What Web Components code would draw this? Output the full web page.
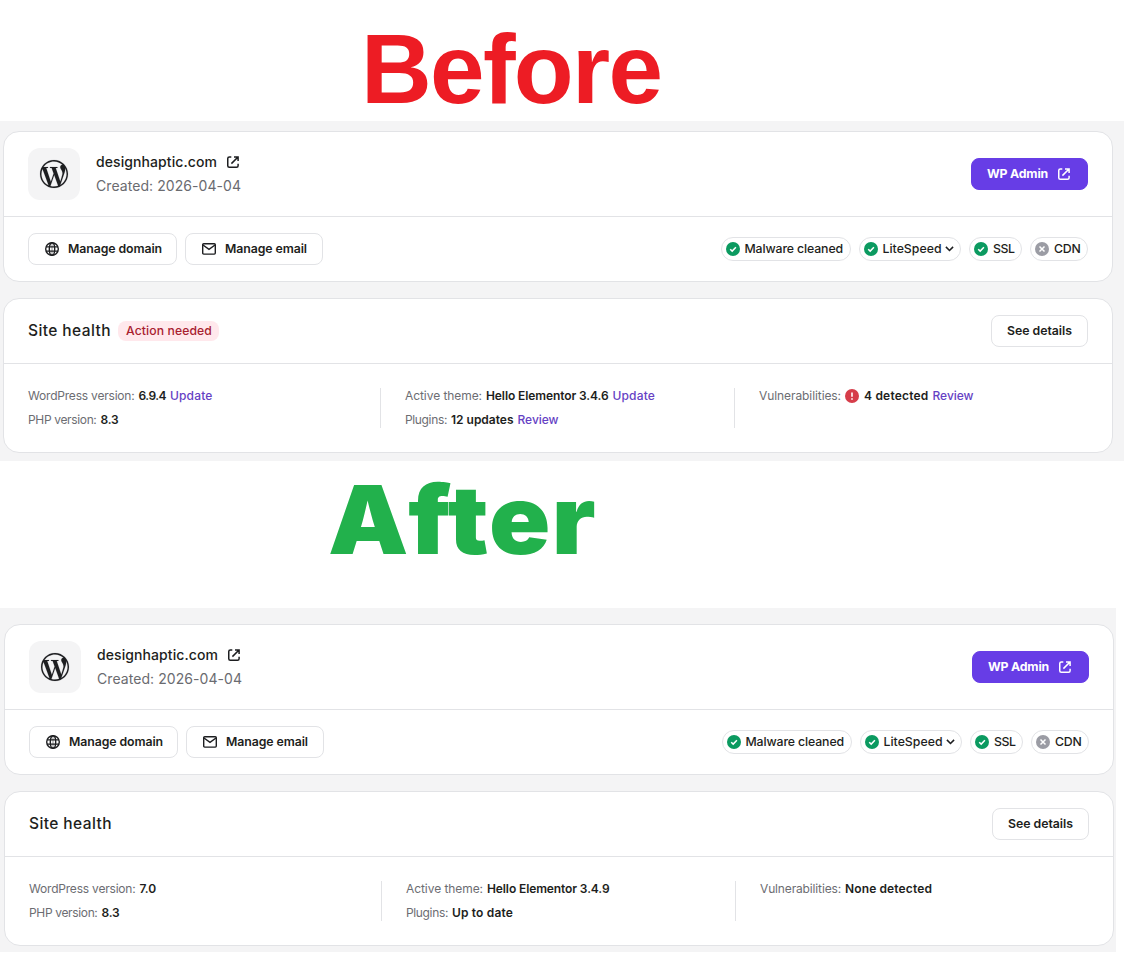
<!DOCTYPE html>
<html lang="en"><head><meta charset="utf-8"><title>Before and after</title>
<style>
body{margin:0;background:#fff;font-family:Inter,"Open Sans",sans-serif;color:#1d1e20}
main{width:1124px;height:976px;display:flex;flex-direction:column;align-items:flex-start}
</style></head><body>
<main>
<big-heading kind="before">Before</big-heading>
<site-panel kind="before"></site-panel>
<big-heading kind="after">After</big-heading>
<site-panel kind="after"></site-panel>
</main>
<script>
const icons={
wp:['0 0 24 24',28,'<path fill="currentColor" stroke="currentColor" stroke-width=".1" fill-rule="evenodd" d="M21.469 6.825c.84 1.537 1.318 3.3 1.318 5.175 0 3.979-2.156 7.456-5.363 9.325l3.295-9.527c.615-1.54.82-2.771.82-3.864 0-.405-.026-.78-.07-1.11m-7.981.105c.647-.03 1.232-.105 1.232-.105.582-.075.514-.93-.067-.899 0 0-1.755.135-2.88.135-1.064 0-2.85-.15-2.85-.15-.585-.03-.661.855-.075.885 0 0 .54.061 1.125.09l1.68 4.605-2.37 7.08L5.354 6.9c.649-.03 1.234-.1 1.234-.1.585-.075.516-.93-.065-.896 0 0-1.746.138-2.874.138-.2 0-.438-.008-.69-.015C4.911 3.15 8.235 1.215 12 1.215c2.809 0 5.365 1.072 7.286 2.833-.046-.003-.091-.009-.141-.009-1.06 0-1.812.923-1.812 1.914 0 .89.513 1.643 1.06 2.531.411.72.89 1.643.89 2.977 0 .915-.354 1.994-.821 3.479l-1.075 3.585-3.9-11.61.001.014zM12 22.784c-1.059 0-2.081-.153-3.048-.437l3.237-9.406 3.315 9.087c.024.053.05.101.078.149-1.12.393-2.325.609-3.582.609M1.211 12c0-1.564.336-3.05.935-4.39L7.29 21.709C3.694 19.96 1.212 16.271 1.211 12M12 0C5.385 0 0 5.385 0 12s5.385 12 12 12 12-5.385 12-12S18.615 0 12 0"/>'],
ext:['0 0 12 12',12,'<path fill="none" stroke="currentColor" stroke-width="1.5" d="M4.3.9H2.4Q.75.9.75 2.4V9.7Q.75 11.25 2.3 11.25H9.6Q11.1 11.25 11.1 9.7V7.7M7 .9H11.1V5M11 1L4.4 7.6"/>'],
globe:['0 0 14 14',14,'<g fill="none" stroke="currentColor" stroke-width="1.4"><circle cx="7" cy="7" r="6.3"/><ellipse cx="7" cy="7" rx="2.7" ry="6.3"/><path d="M1 4.9h12M1 9.1h12"/><path d="M7 1v12" stroke-width=".5"/></g>'],
mail:['0 0 14 12',14,'<g fill="none" stroke="currentColor" stroke-width="1.4"><rect x=".7" y=".7" width="12.6" height="10.4" rx="1"/><path d="M1 2l6 4.3L13 2"/></g>'],
ok:['0 0 14 14',14,'<circle cx="7" cy="7" r="7" fill="#0b9a60"/><path d="M4.2 7.2l2 1.9 3.7-3.8" fill="none" stroke="#fff" stroke-width="1.5"/>'],
off:['0 0 14 14',14,'<circle cx="7" cy="7" r="7" fill="#9b9ca4"/><path d="M4.5 4.5l5 5M9.5 4.5l-5 5" fill="none" stroke="#fff" stroke-width="1.5"/>'],
bang:['0 0 14 14',14,'<circle cx="7" cy="7" r="7" fill="#d63d4a"/><path d="M7 3.4v4.4M7 9.2v1.5" stroke="#fff" stroke-width="1.6"/>'],
chev:['0 0 10 6',9,'<path d="M1 1l4 4 4-4" fill="none" stroke="currentColor" stroke-width="1.7"/>']
};
customElements.define('ui-icon',class extends HTMLElement{
connectedCallback(){const [vb,w,body]=icons[this.getAttribute('name')];
this.attachShadow({mode:'open'}).innerHTML=`<style>:host{display:block;flex:none;width:${w}px}svg{display:block;width:100%;overflow:visible}</style><svg viewBox="${vb}">${body}</svg>`}});

/* Single line of text tracked so that it fills the width given in "w". */
customElements.define('ui-text',class extends HTMLElement{
connectedCallback(){const w=+this.getAttribute('w');
this.attachShadow({mode:'open'}).innerHTML=`<style>:host{display:block;flex:none;white-space:nowrap;width:${w}px}span{display:inline-block}</style><span><slot></slot></span>`;
const s=this.shadowRoot.querySelector('span');
this.style.letterSpacing=((w-s.getBoundingClientRect().width)/this.textContent.length).toFixed(4)+'px'}});

customElements.define('big-heading',class extends HTMLElement{
connectedCallback(){const b=this.getAttribute('kind')==='before';
this.attachShadow({mode:'open'}).innerHTML=`<style>
:host{display:block;box-sizing:border-box;flex:none;width:1124px;white-space:nowrap;
${b?'height:121px;padding:19px 0 0 361px;font:700 98px/100px "Liberation Sans",Arial,sans-serif;letter-spacing:-1.7px;color:#ed1c24':'height:147px;padding:9px 0 0 328px;font:900 95px/100px Inter,sans-serif;letter-spacing:1.4px;color:#22b14c'}}
h1{margin:0;font:inherit;width:max-content;transform-origin:0 0;${b?'':'transform:scaleX(1.065)'}}</style><h1><slot></slot></h1>`}});

customElements.define('ui-button',class extends HTMLElement{
connectedCallback(){this.attachShadow({mode:'open'}).innerHTML=`<style>
:host{display:flex;flex:none;box-sizing:border-box;width:${this.getAttribute('width')}px;height:32px;border:1px solid #e2e3e6;border-radius:8px;align-items:center;padding-left:${this.hasAttribute('tight')?15:16}px;gap:9px;font-size:12.3px;font-weight:600;line-height:20px;background:#fff}
:host([primary]){background:#673de6;border-color:#673de6;color:#fff;gap:10px;font-weight:700}</style><slot></slot>`}});

customElements.define('ui-pill',class extends HTMLElement{
connectedCallback(){this.attachShadow({mode:'open'}).innerHTML=`<style>
:host{display:flex;flex:none;box-sizing:border-box;width:${this.getAttribute('width')}px;height:24px;border:1px solid #e2e3e6;border-radius:12px;align-items:center;padding-left:4px;gap:${this.getAttribute('gap')||4.5}px;font-size:12.3px;font-weight:500;line-height:20px}</style><slot></slot>`}});

customElements.define('ui-card',class extends HTMLElement{
connectedCallback(){this.attachShadow({mode:'open'}).innerHTML=`<style>
:host{display:block;box-sizing:border-box;width:1110px;background:#fff;border:1px solid #e2e3e6;border-radius:16px}
.head{display:flex;box-sizing:border-box;align-items:center;justify-content:space-between;padding:0 24px;height:${this.getAttribute('head')}px;border-bottom:1px solid #e2e3e6}
</style><div class="head"><slot name="head"></slot></div><slot></slot>`}});

customElements.define('site-panel',class extends HTMLElement{
connectedCallback(){const b=this.getAttribute('kind')==='before';
this.attachShadow({mode:'open'}).innerHTML=`<style>
:host{display:flex;flex-direction:column;flex:none;box-sizing:border-box;gap:16px;background:#f4f4f5;${b?'width:1124px;height:340px;padding:10px 0 0 3px':'width:1116px;height:344px;padding:16px 0 0 4px'}}
.row{display:flex;align-items:center}
.tile{width:52px;height:52px;border-radius:12px;background:#f4f4f5;display:grid;place-items:center;margin-right:16px}
.name{font-size:14px;font-weight:500;line-height:24px;gap:10px}
.date{font-size:14px;line-height:24px;color:#6a6b70;font-weight:400}
.foot{height:64px;padding:0 24px;justify-content:space-between}
.g8{gap:8px}
h2{margin:0;font-size:15.5px;font-weight:550;line-height:24px}
.badge{margin-left:7px;height:20px;line-height:20px;border-radius:8px;background:#ffe8ec;color:#a8202f;font-size:12.2px;font-weight:500;padding:0 7px 0 8px}
.grid{display:grid;grid-template-columns:352px 354px 1fr;padding:24px;height:40px}
.col{font-size:12px;line-height:24px;color:#6c6d72;font-weight:400;margin-top:-4px}
.col .row{height:24px;gap:4px}
.col+.col{padding-left:25px;position:relative}
.col+.col::before{content:"";position:absolute;left:0;top:4px;width:1px;height:40px;background:#e2e3e6}
.v{color:#1d1e20;font-weight:600;font-size:12px}
.l{color:#6541c4;font-weight:500}
</style>
<ui-card head="85">
<div class="row" slot="head"><div class="tile"><ui-icon name="wp"></ui-icon></div>
<div><div class="row name"><ui-text w="121">designhaptic.com</ui-text><ui-icon name="ext"></ui-icon></div><div class="date"><ui-text w="145">Created: 2026-04-04</ui-text></div></div></div>
<ui-button slot="head" primary tight width="117"><ui-text w="61">WP Admin</ui-text><ui-icon name="ext"></ui-icon></ui-button>
<div class="row foot"><div class="row g8"><ui-button width="149"><ui-icon name="globe"></ui-icon><ui-text w="94">Manage domain</ui-text></ui-button><ui-button width="138"><ui-icon name="mail"></ui-icon><ui-text w="82">Manage email</ui-text></ui-button></div>
<div class="row g8"><ui-pill width="130"><ui-icon name="ok"></ui-icon><ui-text w="98.5">Malware cleaned</ui-text></ui-pill><ui-pill width="102"><ui-icon name="ok"></ui-icon><ui-text w="59">LiteSpeed</ui-text><ui-icon name="chev" style="margin-left:-1.5px"></ui-icon></ui-pill><ui-pill width="53" gap="5"><ui-icon name="ok"></ui-icon><ui-text w="21.5">SSL</ui-text></ui-pill><ui-pill width="58" gap="5"><ui-icon name="off"></ui-icon><ui-text w="26.5">CDN</ui-text></ui-pill></div></div>
</ui-card>
<ui-card head="65">
<div class="row" slot="head"><h2><ui-text w="83">Site health</ui-text></h2>${b?'<div class="badge"><ui-text w="86">Action needed</ui-text></div>':''}</div>
<ui-button slot="head" tight width="97"><ui-text w="65">See details</ui-text></ui-button>
<div class="grid">
<div class="col"><div class="row"><ui-text w="106.5">WordPress version:</ui-text>${b?'<ui-text class="v" w="27.5">6.9.4</ui-text><ui-text class="l" w="42.5">Update</ui-text>':'<ui-text class="v" w="16.5">7.0</ui-text>'}</div>
<div class="row"><ui-text w="68.5">PHP version:</ui-text><ui-text class="v" w="18">8.3</ui-text></div></div>
<div class="col"><div class="row"><ui-text w="77">Active theme:</ui-text>${b?'<ui-text class="v" w="122.5">Hello Elementor 3.4.6</ui-text><ui-text class="l" w="42.5">Update</ui-text>':'<ui-text class="v" w="122.5">Hello Elementor 3.4.9</ui-text>'}</div>
<div class="row"><ui-text w="42">Plugins:</ui-text>${b?'<ui-text class="v" w="62.5">12 updates</ui-text><ui-text class="l" w="41">Review</ui-text>':'<ui-text class="v" w="61">Up to date</ui-text>'}</div></div>
<div class="col"><div class="row"><ui-text w="${b?82:81}">Vulnerabilities:</ui-text>${b?'<ui-icon name="bang"></ui-icon><ui-text class="v" w="64.5" style="margin-left:1px">4 detected</ui-text><ui-text class="l" w="41">Review</ui-text>':'<ui-text class="v" w="87">None detected</ui-text>'}</div></div>
</div></ui-card>`}});
</script></body></html>
